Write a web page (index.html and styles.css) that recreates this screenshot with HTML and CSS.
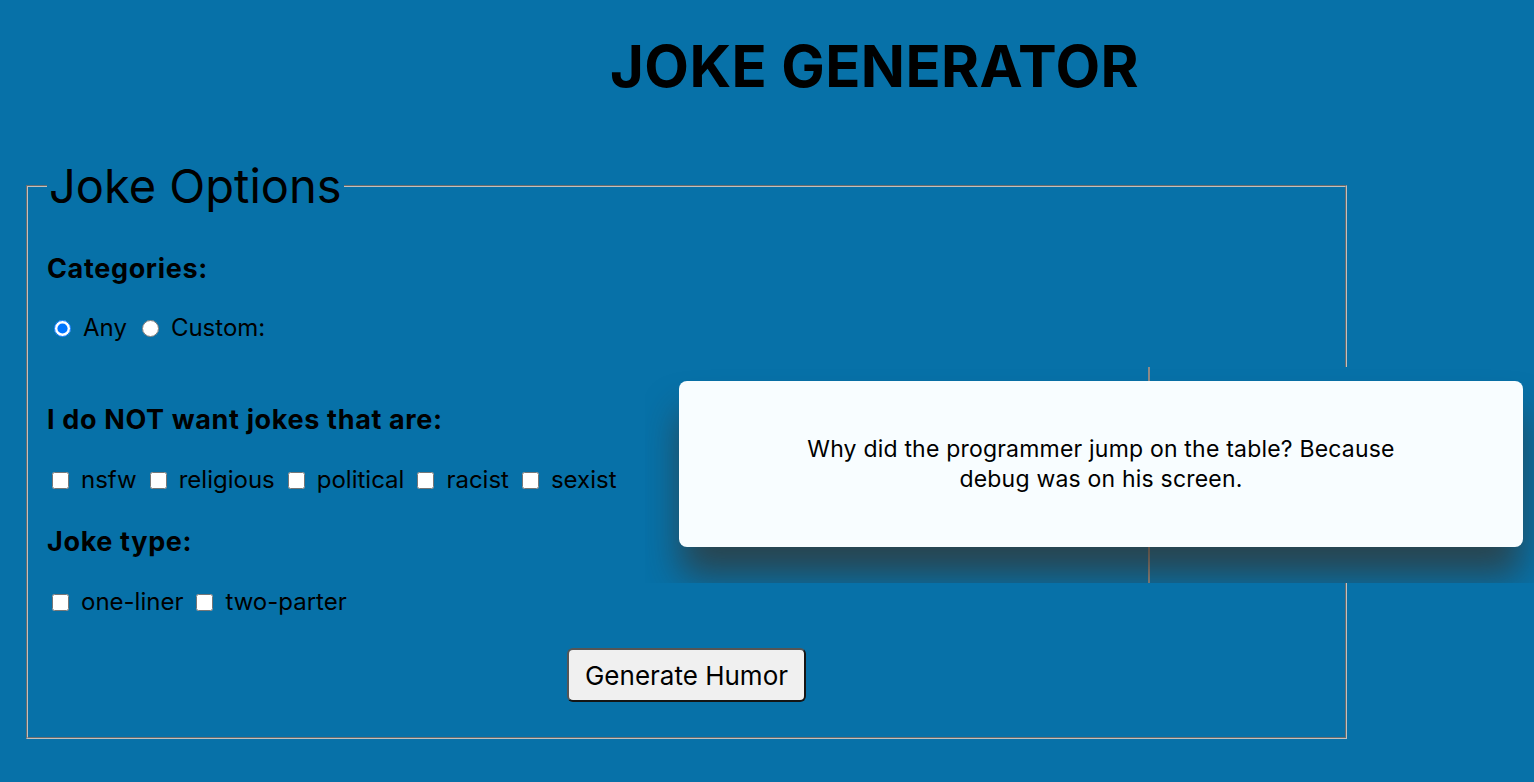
FILE: index.html
```html
<!DOCTYPE html>
<html lang="en">
<head>
<meta charset="utf-8">
<title>Joke Generator</title>
<link rel="stylesheet" href="styles.css">
</head>
<body>
  <header class="header">
    <h1 class="title">JOKE GENERATOR</h1>
  </header>
  <main class="main">
    <form class="options">
      <fieldset class="options-set">
        <legend class="options-legend">Joke Options</legend>
        <h3 class="group-title first">Categories:</h3>
        <div class="choice-row row-categories">
          <label class="choice"><input type="radio" name="cat" checked><span>Any</span></label>
          <label class="choice"><input type="radio" name="cat"><span>Custom:</span></label>
        </div>
        <h3 class="group-title">I do NOT want jokes that are:</h3>
        <div class="choice-row row-flags">
          <label class="choice"><input type="checkbox"><span>nsfw</span></label>
          <label class="choice"><input type="checkbox"><span>religious</span></label>
          <label class="choice"><input type="checkbox"><span>political</span></label>
          <label class="choice"><input type="checkbox"><span>racist</span></label>
          <label class="choice"><input type="checkbox"><span>sexist</span></label>
        </div>
        <h3 class="group-title">Joke type:</h3>
        <div class="choice-row row-type">
          <label class="choice"><input type="checkbox"><span>one-liner</span></label>
          <label class="choice"><input type="checkbox"><span>two-parter</span></label>
        </div>
        <div class="actions">
          <button type="button" class="generate">Generate Humor</button>
        </div>
      </fieldset>
    </form>
    <div class="joke-layer">
      <div class="joke-card">
        <p class="joke-text">Why did the programmer jump on the table? Because debug was on his screen.</p>
      </div>
    </div>
  </main>
</body>
</html>
```
FILE: styles.css
```css
html, body {
  margin: 0;
  padding: 0;
}
body {
  background: #0771a8;
  font-family: Inter, "Open Sans", sans-serif;
  color: #000;
  min-height: 782px;
  position: relative;
}
.header {
  padding: 34px 0 0 215px;
}
.title {
  margin: 0;
  text-align: center;
  font-size: 58px;
  line-height: 64px;
  font-weight: 700;
  letter-spacing: 0.4px;
}
.main {
  padding: 64px 0 0 26px;
}
.options {
  width: 1321px;
}
.options-set {
  margin: 0;
  padding: 0 19px 35px 19px;
  border: 2px groove #c0c0c0;
  min-width: 0;
}
.options-legend {
  font-size: 47px;
  line-height: 48px;
  padding: 0 2px;
  margin-left: 0;
}
.group-title {
  margin: 0;
  font-size: 27px;
  line-height: 32px;
  font-weight: 700;
  letter-spacing: 0.65px;
}
.group-title.first {
  margin-top: 43px;
}
.choice-row {
  display: flex;
  align-items: center;
  margin-top: 28px;
  font-size: 24px;
  line-height: 30px;
}
.row-categories {
  margin-bottom: 61px;
}
.row-flags {
  margin-top: 29px;
  margin-bottom: 31px;
}
.row-type {
  margin-top: 29px;
  margin-bottom: 31px;
}
.choice {
  display: flex;
  align-items: center;
}
.choice input {
  width: 17px;
  height: 17px;
  margin: 0 12px 0 5px;
}
.choice input[type="radio"] {
  margin: 0 12px 0 7px;
}
.choice span {
  margin-right: 8px;
}
.actions {
  display: flex;
  justify-content: center;
}
.generate {
  font-family: Inter, "Open Sans", sans-serif;
  font-size: 26px;
  height: 54px;
  padding: 0 16px;
  background: #f0f0f0;
  color: #000;
  border: 2px solid;
  border-color: #555 #151515 #151515 #555;
  border-radius: 6px;
}
.joke-layer {
  position: absolute;
  left: 645px;
  top: 367px;
  width: 889px;
  height: 216px;
  background: #0771a8;
  overflow: hidden;
}
.joke-layer::before {
  content: "";
  position: absolute;
  left: 503px;
  top: 0;
  width: 2px;
  height: 216px;
  background: #8f8a86;
}
.joke-card {
  position: absolute;
  left: 34px;
  top: 14px;
  width: 844px;
  height: 166px;
  background: #f8fdff;
  border-radius: 8px;
  box-shadow: 0 30px 36px -2px rgba(60, 45, 30, 0.65);
  display: flex;
  align-items: center;
  justify-content: center;
}
.joke-text {
  margin: 0;
  max-width: 610px;
  text-align: center;
  font-size: 23px;
  line-height: 30px;
  letter-spacing: 0.2px;
}
```
